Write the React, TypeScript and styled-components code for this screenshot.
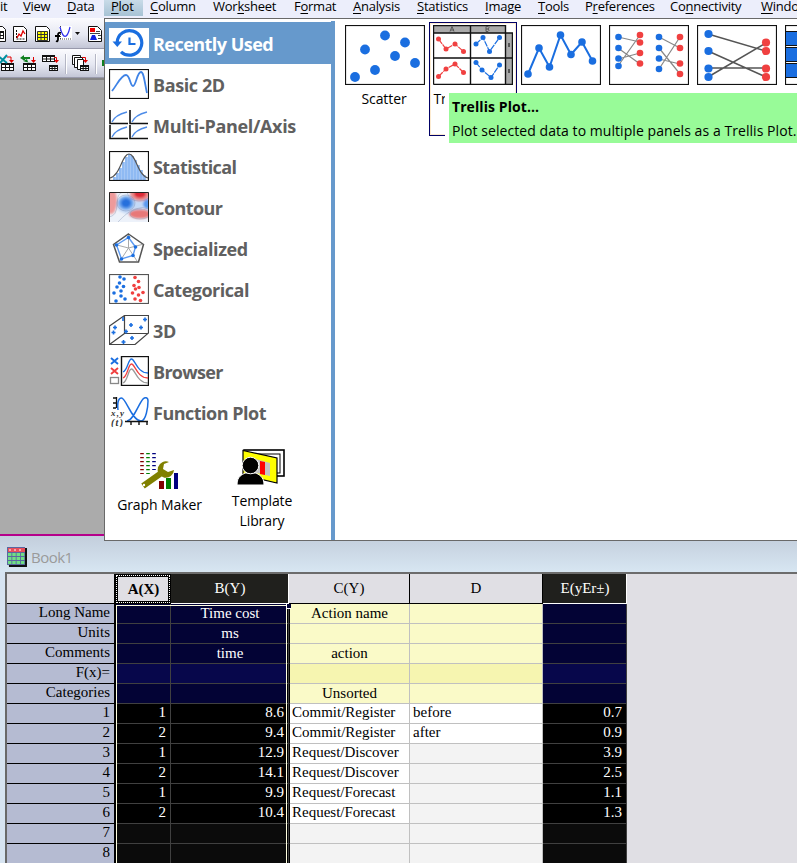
import React from 'react';
import styled, { createGlobalStyle, css } from 'styled-components';

const Global = createGlobalStyle`
  * { box-sizing: border-box; }
  body { margin: 0; overflow: hidden; background: #ababab; }
`;

const ui = "'Open Sans', 'Noto Sans', sans-serif";
const serif = "'Liberation Serif', serif";

const Screen = styled.div`
  position: relative;
  width: 797px;
  height: 863px;
  overflow: hidden;
  display: flex;
  flex-direction: column;
  background: #ababab;
  font-family: ${ui};
  color: #000;
`;

const MenuBar = styled.nav`
  display: flex;
  height: 18px;
  flex: none;
  background: #eceefb;
`;

const MenuItem = styled.div<{ $w: number; $pad?: number; $open?: boolean }>`
  flex: none;
  width: ${p => p.$w}px;
  height: 16px;
  padding-left: ${p => p.$pad ?? 8}px;
  font-size: 13px;
  line-height: 12px;
  letter-spacing: -0.25px;
  white-space: nowrap;
  background: ${p => (p.$open ? 'linear-gradient(#c9dbe8, #a6c2d4)' : 'transparent')};
  u { text-underline-offset: 2px; text-decoration-thickness: 1px; }
`;

const ToolRow = styled.div<{ $h: number }>`
  flex: none;
  height: ${p => p.$h}px;
  width: 105px;
  overflow: hidden;
  background: linear-gradient(#fbfbfe, #e6e8f2 55%, #c3c6d6);
  border-bottom: 1px solid #9899ab;
  svg { display: block; }
`;

const Workspace = styled.div`
  flex: none;
  height: 458px;
  border-top: 2px solid #858585;
  border-bottom: 2px solid #b5008a;
`;

const BookWindow = styled.section`
  flex: 1;
  display: flex;
  flex-direction: column;
  background: #d7e4f1;
`;

const TitleBar = styled.header`
  flex: none;
  height: 36px;
  display: flex;
  align-items: center;
  padding: 5px 0 0 7px;
  gap: 4px;
  background: linear-gradient(#c3cedc, #d7e6f2);
  color: #9a9a9a;
  font-size: 15px;
  letter-spacing: -0.5px;
`;

const Sheet = styled.div`
  position: relative;
  flex: 1;
  margin-left: 5px;
  border: 0 solid #696969;
  border-width: 2px 0 0 2px;
  border-top-color: #6c6c6c;
  background: #e0dfe4;
  font-family: ${serif};
  font-size: 15px;
`;

const HeadRow = styled.div`
  display: grid;
  grid-template-columns: 108px 56px 118px 121px 133px 84px;
  height: 30px;
`;

const HeadCell = styled.div<{ $dark?: boolean; $focus?: boolean }>`
  display: flex;
  align-items: center;
  justify-content: center;
  padding-bottom: 1px;
  border-right: 1px solid #000;
  border-bottom: 1px solid #000;
  background: #e0dfe4;
  ${p => p.$dark && css`
    background: #20201d;
    color: #fff;
    border-color: #fff;
    padding-left: 1px;
  `}
  ${p => p.$focus && css`
    font-weight: bold;
    padding: 1px 0 0 1px;
    border: 1px solid #000;
    outline: 1px dotted #fff;
    outline-offset: -2px;
    box-shadow: inset 0 0 0 2px #000;
  `}
`;

const Row = styled.div`
  display: grid;
  grid-template-columns: 109px 55px 119px 120px 133px 84px;
  height: 20px;
`;

type Tone = 'name' | 'navy' | 'navyHi' | 'yellow' | 'yellowHi' | 'black' | 'blackEmpty' | 'white' | 'empty';
const tones: Record<Tone, [string, string, string]> = {
  name: ['#b5bbd2', '#000', '#000'],
  navy: ['#030335', '#fff', '#404040'],
  navyHi: ['#07074b', '#fff', '#404040'],
  yellow: ['#fafac8', '#000', '#c0c0c0'],
  yellowHi: ['#f6f5b0', '#000', '#c0c0c0'],
  black: ['#000', '#fff', '#404040'],
  blackEmpty: ['#0b0b0b', '#fff', '#404040'],
  white: ['#fff', '#000', '#c0c0c0'],
  empty: ['#f3f3f3', '#000', '#c0c0c0'],
};

const Cell = styled.div<{ $tone: Tone; $align?: string; $pad?: number; $edge?: boolean; $data?: boolean }>`
  height: 20px;
  line-height: ${p => (p.$data ? 16 : 18)}px;
  overflow: hidden;
  white-space: nowrap;
  text-align: ${p => p.$align ?? 'center'};
  padding: 0 ${p => p.$pad ?? 3}px;
  background: ${p => tones[p.$tone][0]};
  color: ${p => tones[p.$tone][1]};
  border-bottom: 1px solid ${p => tones[p.$tone][2]};
  border-right: ${p => (p.$tone === 'name' ? 2 : 1)}px solid ${p => tones[p.$tone][2]};
  ${p => p.$edge && css`
    border-right-color: #000;
    box-shadow: inset -1px 0 #404040, inset -2px 0 #000;
  `}
`;

const Selection = styled.div`
  position: absolute;
  left: 109px;
  top: 31px;
  width: 171px;
  height: 400px;
  border: 1px solid #ffffe0;
`;

const Handle = styled.div`
  position: absolute;
  left: 279px;
  top: 30px;
  width: 5px;
  height: 5px;
  background: #000033;
  border-left: 1px solid #fff;
  border-bottom: 1px solid #fff;
`;

const Popup = styled.div`
  position: absolute;
  left: 104px;
  top: 18px;
  width: 693px;
  height: 523px;
  display: flex;
  background: #fff;
  border: 1px solid #696969;
  border-right: 0;
`;

const Side = styled.aside`
  width: 230px;
  flex: none;
  margin-top: 2px;
  padding-top: 1px;
  border-right: 4px solid #6699cc;
`;

const Category = styled.div<{ $active?: boolean }>`
  position: relative;
  display: flex;
  align-items: center;
  gap: 4px;
  height: 41px;
  padding-left: 4px;
  background: ${p => (p.$active ? '#6699cc' : 'transparent')};
  box-shadow: ${p => (p.$active ? '0 1px #6699cc' : 'none')};
  color: ${p => (p.$active ? '#fff' : '#606060')};
  font-size: 18px;
  font-weight: 700;
  white-space: nowrap;
  svg { flex: none; display: block; }
`;

const CatLabel = styled.span<{ $ls: number }>`
  letter-spacing: ${p => p.$ls}px;
  padding-top: 3px;
`;

const Tools = styled.div`
  display: flex;
  padding-top: 17px;
`;

const Tool = styled.div<{ $w: number; $gap: number; $top?: number }>`
  width: ${p => p.$w}px;
  padding-top: ${p => p.$top ?? 0}px;
  display: flex;
  flex-direction: column;
  align-items: center;
  text-align: center;
  font-size: 14px;
  line-height: 20px;
  letter-spacing: -0.1px;
  white-space: pre-line;
  svg { display: block; margin-bottom: ${p => p.$gap}px; }
`;

const Gallery = styled.div`
  display: flex;
  flex: 1;
  overflow: hidden;
  padding: 3px 0 0 6px;
`;

const Plot = styled.div<{ $selected?: boolean }>`
  flex: none;
  width: 88px;
  height: 114px;
  padding-top: 2px;
  display: flex;
  flex-direction: column;
  align-items: center;
  border: 1px solid ${p => (p.$selected ? '#000066' : 'transparent')};
  box-shadow: ${p => (p.$selected ? 'inset 0 0 0 1px #fdebd0' : 'none')};
  font-size: 14px;
  letter-spacing: -0.1px;
  line-height: 20px;
  white-space: nowrap;
  svg { display: block; flex: none; margin-bottom: 4px; }
  span { margin-right: 2px; }
`;

const Tooltip = styled.div`
  position: absolute;
  left: 344px;
  top: 74px;
  width: 350px;
  height: 50px;
  padding: 4px 0 0 3px;
  background: #98fb98;
  font-size: 14px;
  line-height: 24px;
  letter-spacing: 0.06px;
  white-space: nowrap;
  box-shadow: -4px 0 #fff;
  b { display: block; line-height: 20px; margin-bottom: 2px; letter-spacing: 0.08px; }
`;

const blue = '#1a6ee0';
const red = '#f04040';

const Dots = ({ pts, r, fill }: { pts: number[][]; r: number; fill: string }) => (
  <g fill={fill}>{pts.map(([x, y]) => <circle key={x + '-' + y} cx={x} cy={y} r={r} />)}</g>
);

const line = (pts: number[][]) => pts.map(p => p.join(',')).join(' ');

const Frame = ({ children }: { children: React.ReactNode }) => (
  <svg width="80" height="60" viewBox="0 0 80 60">
    <rect x="0.5" y="0.5" width="79" height="59" fill="#fff" stroke="#111" strokeWidth="1.2" />
    {children}
  </svg>
);

const linePts = [[7, 49], [18, 23], [28.5, 42], [39.5, 10], [50, 29.5], [61, 17], [71.5, 36]];

const ScatterPic = () => (
  <Frame><Dots r={4.9} fill={blue} pts={[[10, 52], [20, 24.5], [30, 45], [40, 10.5], [50, 31], [60, 17.5], [70, 38]]} /></Frame>
);

const trellis: [string, number[][]][] = [
  [red, [[5.5, 14], [13, 24], [22, 19], [30.5, 26.5]]],
  [blue, [[43, 19], [50, 12.5], [56.5, 26.5], [66.5, 12.5]]],
  [red, [[5.5, 51.5], [13, 44], [22, 39], [30.5, 47.5]]],
  [blue, [[43, 37.5], [49, 45], [58, 52.5], [66.5, 40]]],
];

const TrellisPic = () => (
  <svg width="80" height="60" viewBox="0 0 80 60">
    <rect x="0" y="0" width="72" height="8" fill="#aaa" />
    <rect x="72" y="8" width="8" height="52" fill="#aaa" />
    <g fill="none" stroke="#111" strokeWidth="1.4">
      <path d="M.5 59.5V.5H72.5V59.5M.5 59.500H79.500V8M0 8H80M0 33H80M37.500 0V60" />
    </g>
    <g fill="none" stroke="#555">
      <path d="M17 6.500l2-5 2 5M18 5h3M53 1.500v5h2q2-1 0-2.500h-2M53 1.500h2q2 1 0 2.500" />
      <path d="M76 18v4M76 44v4" stroke="#555" strokeWidth="2" />
    </g>
    {trellis.map(([c, p], i) => (
      <g key={i}>
        <polyline points={line(p)} fill="none" stroke={c} strokeWidth="1.2" strokeDasharray="6 .8" />
        <Dots pts={p} r={2.5} fill={c} />
      </g>
    ))}
  </svg>
);

const LinePic = () => (
  <Frame>
    <polyline points={line(linePts)} fill="none" stroke={blue} strokeWidth="2" />
    <Dots pts={linePts} r={3.8} fill={blue} />
  </Frame>
);

const GroupPic = () => (
  <Frame>
    <path d="M9 12L31 17M9 23L31 39M9 34L31 28M9 41L31 10M50 12L71 23M50 23L71 49M50 34L71 39M50 44L71 12" stroke="#888" strokeWidth="1.2" fill="none" />
    <Dots r={3.3} fill={blue} pts={[[9.5, 12], [9.5, 23], [9.5, 33.5], [9.5, 41], [50, 12], [50, 23], [50, 33.5], [50, 44]]} />
    <Dots r={3.3} fill={red} pts={[[31, 10], [31, 17.5], [31, 28], [31, 38.5], [71, 12], [71, 23], [71, 38.5], [71, 49]]} />
  </Frame>
);

const BeforeAfterPic = () => (
  <Frame>
    <path d="M11 9L69 26M11 26L69 52M11 43H69M11 52L69 18" stroke="#555" strokeWidth="1.5" fill="none" />
    <Dots r={4.1} fill={blue} pts={[[11.5, 9], [11.5, 26], [11.5, 43.5], [11.5, 52]]} />
    <Dots r={4.1} fill={red} pts={[[69, 17.5], [69, 26], [69, 43.5], [69, 52]]} />
  </Frame>
);

const BarPic = () => (
  <Frame>
    {[7, 23, 39].map(y => <rect key={y} x="0.5" y={y - 0.5} width="60" height="14" fill={blue} stroke="#111" />)}
  </Frame>
);

const Icon = ({ children, bg }: { children: React.ReactNode; bg?: string }) => (
  <svg width="40" height="30" viewBox="0 0 40 30" fill="none">
    {bg && <rect width="40" height="30" fill={bg} />}
    {children}
  </svg>
);
const Box = ({ c = '#111' }: { c?: string }) => <rect x="0.5" y="0.5" width="39" height="29" stroke={c} strokeWidth="1.2" />;

const RecentIcon = () => (
  <Icon bg="#fff">
    <path d="M8.200 14A12.300 12.300 0 1 1 12 23.800" stroke={blue} strokeWidth="3.2" />
    <path d="M3.500 13.500H13L8.300 19z" fill={blue} />
    <path d="M20.500 9.500V16H26.500" stroke={blue} strokeWidth="2.2" />
  </Icon>
);
const BasicIcon = () => (
  <Icon bg="#fff"><Box /><path d="M3 22C8 16 12 6 17 6c4 0 4 11 7 11S28 3 32 3c3 0 4 13 6 21" stroke="#3f83e6" strokeWidth="1.8" /></Icon>
);
const PanelIcon = () => (
  <Icon>
    {[[1, 0], [21, 0], [1, 15], [21, 15]].map(([x, y]) => (
      <g key={x + '-' + y} transform={`translate(${x} ${y})`}>
        <path d="M0 0V13.500H18" stroke="#111" strokeWidth="1.6" />
        <path d="M2 12Q5 5 17 2" stroke="#4e8ce8" strokeWidth="1.3" />
      </g>
    ))}
  </Icon>
);
const StatIcon = () => (
  <Icon bg="#fff">
    {[[4, 26], [7, 22], [10, 17], [13, 11], [16, 6], [19, 3], [22, 5], [25, 9], [28, 14], [31, 19], [34, 24]].map(([x, y]) => (
      <rect key={x} x={x} y={y} width="2.8" height={29 - y} fill="#8fbaf3" />
    ))}
    <path d="M1 27C11 25 13 3 20 3s9 22 19 24" stroke="#555" strokeWidth="1.2" />
    <Box />
  </Icon>
);
const ContourIcon = () => (
  <svg width="40" height="30" viewBox="0 0 40 30">
    <defs>
      <filter id="soft" x="-30%" y="-30%" width="160%" height="160%"><feGaussianBlur stdDeviation="1.2" /></filter>
      <clipPath id="frame"><rect width="40" height="30" /></clipPath>
    </defs>
    <rect width="40" height="30" fill="#edf2fa" />
    <g clipPath="url(#frame)">
      <g filter="url(#soft)">
        <ellipse cx="21" cy="13" rx="14" ry="9" fill="#c4d9f6" />
        <ellipse cx="17" cy="11" rx="8" ry="7" fill="#6ea8ee" /><ellipse cx="17" cy="11" rx="5" ry="4.5" fill="#2870dc" />
        <ellipse cx="31" cy="2" rx="10" ry="7" fill="#ec8c8c" /><ellipse cx="31" cy="2" rx="6" ry="4" fill="#dd2c38" />
        <ellipse cx="2" cy="9" rx="6" ry="13" fill="#ee9a9a" /><ellipse cx="31" cy="22" rx="11" ry="4.5" fill="#e87878" />
        <ellipse cx="39" cy="12" rx="5" ry="5" fill="#5b9aee" />
      </g>
      <g fill="none" stroke="#8492b0" strokeWidth=".4">
        <ellipse cx="17" cy="11" rx="9" ry="8" /><ellipse cx="31" cy="22" rx="10" ry="5" /><path d="M0 25Q8 24 8 12T15 0M18 0Q20 9 30 9T40 3M9 30Q18 20 26 17T40 17" />
      </g>
    </g>
    <path d="M.5 30V.5H39.500V30" fill="none" stroke="#222" />
  </svg>
);
const RadarIcon = () => (
  <Icon>
    <g stroke="#aaa"><path d="M19.500 15V2M19.500 15L33 11.500M19.500 15L28 28M19.500 15L11 28M19.500 15L6 11.500" /></g>
    <path d="M19.500 1L34.500 11.500 29.500 29H10.500L4.500 11.500z" stroke="#555" strokeWidth="1.5" />
    <path d="M19.500 4.500L26.500 14 24 22.500 12.500 26 7.500 12z" stroke="#5d9af0" strokeWidth="1.4" />
    <Dots r={1.8} fill={blue} pts={[[19.5, 4.5], [26.5, 14], [24, 22.5], [12.5, 26], [7.5, 12]]} />
  </Icon>
);
const CategoricalIcon = () => (
  <Icon bg="#fff">
    <Box c="#555" />
    <Dots r={1.8} fill={blue} pts={[[11, 3], [15, 5], [10.5, 9], [8, 13], [14.5, 12.5], [12, 17], [5, 19], [12, 22], [16, 25], [7, 27]]} />
    <Dots r={1.8} fill={red} pts={[[26, 3.5], [29.5, 7.5], [25, 11.5], [30, 13.5], [26.5, 15], [23.5, 19], [34, 18.5], [29.5, 21], [26, 25], [31.5, 26.5]]} />
  </Icon>
);
const CubeIcon = () => (
  <Icon>
    <path d="M.5 11L15.500.5H39.500V18L26 29.500H.5zM15.500.5V18.500H39.500M15.500 18.500L.5 29.500" stroke="#444" strokeWidth="1.2" />
    <path d="M6 10.500v4M4 12.500h4M4.500 15.500v4M2.500 17.500h4M22 8v4M20 10h4M36 2.500v4M34 4.500h4M32 10.500v4M30 12.500h4M17 14.500v4M15 16.500h4M23 21v4M21 23h4M14.500 25v4M12.500 27h4M14 2v4" stroke={blue} strokeWidth="1.6" />
  </Icon>
);
const BrowserIcon = () => (
  <Icon>
    <path d="M2 2l7 6M9 2L2 8" stroke={blue} strokeWidth="1.9" />
    <path d="M2 12l7 6M9 12l-7 6" stroke={red} strokeWidth="1.9" />
    <rect x="1.500" y="21.500" width="8" height="6" stroke="#888" strokeWidth="1.3" />
    <rect x="12.500" y=".5" width="27" height="29" stroke="#111" strokeWidth="1.4" />
    <path d="M14 27C19 25 19 13 22.500 13S28 27 39 27" stroke="#999" strokeWidth="1.3" />
    <path d="M14 22C19 20 19 8 22.500 8S28 22 39 22" stroke={red} strokeWidth="1.3" />
    <path d="M14 16C19 14 19 3 22.500 3S28 17 39 17" stroke={blue} strokeWidth="1.3" />
  </Icon>
);
const FunctionIcon = () => (
  <Icon>
    <path d="M7.500 0V11M4 1h3M4 6h3M4 11h3" stroke="#111" strokeWidth="1.3" />
    <path d="M9 13C8 4 10 1 12.500 1C17 1 23 24 32 24C37 24 39 10 39 4C39 0 36 0 34 2C29 8 24 24 18 24" stroke={blue} strokeWidth="1.5" />
    <path d="M16 24.500H39M22 25v3M30 25v3M38 25v3" stroke="#111" strokeWidth="1.4" />
    <text x="2" y="19" fontFamily="Liberation Serif" fontStyle="italic" fontSize="9" fontWeight="bold" fill="#333" textLength="13">x,y</text>
    <text x="2" y="29" fontFamily="Liberation Serif" fontStyle="italic" fontSize="10" fontWeight="bold" fill="#333" textLength="12">(t)</text>
  </Icon>
);

const GraphMakerIcon = () => (
  <svg width="40" height="38" viewBox="0 0 40 38">
    {[['#800000', 2, 22], ['#008000', 8, 22], ['#000080', 14, 18]].map(([c, x, end]) => (
      <path key={c} d={`M${x} 1V${end}`} stroke={c as string} strokeWidth="3.6" strokeDasharray="1.200 2.800" />
    ))}
    <path d="M3 34L20 22" stroke="#808000" strokeWidth="6" />
    <path d="M29 10A8.200 8.200 0 1 0 34 18L28 20L23 17L24 12z" fill="#808000" />
    <circle cx="4" cy="33" r="1.200" fill="#fff" />
    <path d="M19 29h5v8h-5z" fill="#800000" /><path d="M26 26h5v11h-5z" fill="#008000" /><path d="M34 21h4v16h-4z" fill="#000080" />
  </svg>
);
const TemplateIcon = () => (
  <svg width="50" height="38" viewBox="0 0 50 38">
    <rect x="7" y="1" width="40" height="26" fill="#fff" stroke="#000" strokeWidth="1.600" />
    <rect x="11" y="5" width="32" height="19" fill="#fff" stroke="#000" />
    <path d="M6 1.500L40 9V34L6 26z" fill="#ff0" stroke="#000" strokeWidth="1.200" />
    <path d="M15 9L33 14V27L15 23z" fill="#c4c4c4" />
    <path d="M23 12L28 13V26L23 25z" fill="#f00" />
    <path d="M0 36C0 27 5 26 8 24H19C25 27 27 30 27 36z" fill="#000" stroke="#fff" />
    <circle cx="13.500" cy="16.500" r="8.300" fill="#000" stroke="#fff" />
  </svg>
);

const MiniGrid = ({ x, y, w = 13, h = 8 }: { x: number; y: number; w?: number; h?: number }) => (
  <g>
    <rect x={x} y={y} width={w} height={h} fill="#111" />
    {[0, 1, 2].map(i => [0, 1].map(j => (
      <rect key={i + '-' + j} x={x + 1 + i * (w - 1) / 3} y={y + 2 + j * (h - 2) / 2} width={(w - 1) / 3 - 1} height={(h - 2) / 2 - 1} fill="#fff" />
    )))}
  </g>
);
const Page = ({ x, w = 14 }: { x: number; w?: number }) => (
  <path d={`M${x + 0.5} 8.500h${w - 4}l3 3v12h-${w - 1}z`} fill="#fff" stroke="#111" />
);

const TopTools = () => (
  <svg width="105" height="29" viewBox="0 0 105 29" fill="none">
    <Page x={-8} /><MiniGrid x={-7} y={13} w={11} />
    <Page x={13} /><path d="M16.500 12v9H25" stroke="#111" strokeDasharray="2 1" /><path d="M17 20l2-4 2 2 2-5 2 3" stroke="#e00000" strokeWidth="1.3" />
    <Page x={35} w={15} />
    <g fill="#ff0" stroke="#333"><path d="M37.500 13.500h10v9h-10zM41 13v9M44.500 13v9M37 16.500h11M37 19.500h11" /></g>
    <rect x="59" y="8" width="13" height="14" fill="#fff" />
    <path d="M58 21H71M60.500 8v13" stroke="#444" strokeDasharray="1 1" />
    <path d="M60 9C63 21 67 22 70 9" stroke="#3030f0" strokeWidth="1.2" />
    <path d="M61 15q-3-1-3 2v4q0 3-2 2M55 18h5" stroke="#000" strokeWidth="1.800" />
    <path d="M75 14h5l-2.500 3z" fill="#111" />
    <path d="M88.500 8.500h9l4 4v11h-13z" fill="#fff" stroke="#111" />
    <path d="M90 10h5v4h-5z" fill="#f00000" /><path d="M90 22l2-5h3l2 5z" fill="#1020e0" />
    <path d="M96 13.500h4M90 15.500h10M98 17.500h3M98 20.500h3" stroke="#444" />
  </svg>
);
const LowerTools = () => (
  <svg width="105" height="30" viewBox="0 0 105 30" fill="none">
    <MiniGrid x={1} y={14} /><path d="M-2 7L7 14M7 6L0 14" stroke="#0090a0" strokeWidth="2" />
    <path d="M7 8h4v4" stroke="#e00000" /><path d="M9 11h5l-2.500 3z" fill="#e00000" />
    <MiniGrid x={23} y={14} />
    <path d="M20 9l4-3v2h6v2h-5v2zM32 14l-4-1-1-3-4 2 3 1z" fill="#108020" />
    <path d="M33.500 8v4" stroke="#e00000" /><path d="M31 11h5l-2.500 3z" fill="#e00000" />
    <MiniGrid x={42} y={6} w={13} h={7} /><MiniGrid x={49} y={16} w={9} h={6} />
    <path d="M54 8.500h2.500V11" stroke="#e00000" /><path d="M54 11h5l-2.500 3z" fill="#e00000" />
    <path d="M65.500 5v20M95.500 5v20" stroke="#b4b6c4" /><path d="M66.500 5v20M96.500 5v20" stroke="#fff" />
    <path d="M72.500 6.500h8v9h-8z" fill="#fff" stroke="#111" /><path d="M74.500 8.500h8v10h-8z" fill="#fff" stroke="#111" /><path d="M77.500 10.500h6v10h-6z" fill="#fff" stroke="#111" />
    <MiniGrid x={80} y={16} w={9} h={6} /><path d="M82 8.500h3.500V11" stroke="#e00000" /><path d="M83 11h5l-2.500 3z" fill="#e00000" />
    <path d="M102 11h3v6h-3z" fill="#108020" />
  </svg>
);
const BookIcon = () => (
  <svg width="20" height="20" viewBox="0 0 20 20">
    <path d="M1 1h19v19H2z" fill="#111" />
    <rect x="0" y="0" width="18" height="18" fill="#5a68a0" />
    {[0, 1, 2, 3].map(i => [0, 1, 2].map(j => (
      <rect key={i + '-' + j} x={1 + i * 4.3} y={6 + j * 4} width="3.400" height="3" fill="#6fe084" />
    )))}
    <path d="M1 1h17v4H1z" fill="#e8505c" /><path d="M3 2v2M8 2v2M13 2v2" stroke="#fff" />
  </svg>
);

const menus: { pre?: string; key?: string; post: string; w: number; pad?: number; open?: boolean }[] = [
  { post: 'it', w: 15, pad: 0 },
  { key: 'V', post: 'iew', w: 44 },
  { key: 'D', post: 'ata', w: 45 },
  { key: 'P', post: 'lot', w: 39, pad: 7, open: true },
  { key: 'C', post: 'olumn', w: 62, pad: 7 },
  { pre: 'Wor', key: 'k', post: 'sheet', w: 81 },
  { pre: 'F', key: 'o', post: 'rmat', w: 59 },
  { key: 'A', post: 'nalysis', w: 64 },
  { key: 'S', post: 'tatistics', w: 68 },
  { key: 'I', post: 'mage', w: 53 },
  { key: 'T', post: 'ools', w: 47 },
  { pre: 'P', key: 'r', post: 'eferences', w: 85 },
  { pre: 'Co', key: 'n', post: 'nectivity', w: 91 },
  { key: 'W', post: 'indow', w: 60 },
];

const categories: [string, React.FC, number][] = [
  ['Recently Used', RecentIcon, -0.53],
  ['Basic 2D', BasicIcon, -0.4],
  ['Multi-Panel/Axis', PanelIcon, -0.33],
  ['Statistical', StatIcon, -0.57],
  ['Contour', ContourIcon, -0.57],
  ['Specialized', RadarIcon, -0.42],
  ['Categorical', CategoricalIcon, -0.5],
  ['3D', CubeIcon, -0.3],
  ['Browser', BrowserIcon, -0.7],
  ['Function Plot', FunctionIcon, -0.5],
];

const labels = [
  ['Long Name', 'Time cost', 'Action name'],
  ['Units', 'ms', ''],
  ['Comments', 'time', 'action'],
  ['F(x)=', '', ''],
  ['Categories', '', 'Unsorted'],
];

const data = [
  ['1', '8.6', 'Commit/Register', 'before', '0.7'],
  ['2', '9.4', 'Commit/Register', 'after', '0.9'],
  ['1', '12.9', 'Request/Discover', '', '3.9'],
  ['2', '14.1', 'Request/Discover', '', '2.5'],
  ['1', '9.9', 'Request/Forecast', '', '1.1'],
  ['2', '10.4', 'Request/Forecast', '', '1.3'],
  ['', '', '', '', ''],
  ['', '', '', '', ''],
];

export default function App() {
  return (
    <Screen>
      <Global />
      <MenuBar>
        {menus.map((m, i) => (
          <MenuItem key={i} $w={m.w} $pad={m.pad} $open={m.open}>
            {m.pre}{m.key && <u>{m.key}</u>}{m.post}
          </MenuItem>
        ))}
      </MenuBar>
      <ToolRow $h={31}><TopTools /></ToolRow>
      <ToolRow $h={29}><LowerTools /></ToolRow>
      <Workspace />
      <BookWindow>
        <TitleBar><BookIcon />Book1</TitleBar>
        <Sheet>
          <HeadRow>
            <HeadCell />
            <HeadCell $focus>A(X)</HeadCell>
            <HeadCell $dark>B(Y)</HeadCell>
            <HeadCell>C(Y)</HeadCell>
            <HeadCell>D</HeadCell>
            <HeadCell $dark>E(yEr±)</HeadCell>
          </HeadRow>
          {labels.map(([name, b, c], i) => {
            const navy: Tone = i === 3 ? 'navyHi' : 'navy';
            const yellow: Tone = i === 3 ? 'yellowHi' : 'yellow';
            return (
              <Row key={name}>
                <Cell $tone="name" $align="right" $pad={4} $data>{name}</Cell>
                <Cell $tone={navy} />
                <Cell $tone={navy} $edge>{b}</Cell>
                <Cell $tone={yellow}>{c}</Cell>
                <Cell $tone={yellow} />
                <Cell $tone={navy} />
              </Row>
            );
          })}
          {data.map(([a, b, c, d, e], i) => {
            const dark: Tone = a ? 'black' : 'blackEmpty';
            return (
              <Row key={i}>
                <Cell $data $tone="name" $align="right" $pad={4}>{i + 1}</Cell>
                <Cell $data $tone={dark} $align="right" $pad={4}>{a}</Cell>
                <Cell $data $tone={dark} $align="right" $pad={5} $edge>{b}</Cell>
                <Cell $data $tone={c ? 'white' : 'empty'} $align="left" $pad={2}>{c}</Cell>
                <Cell $data $tone={d ? 'white' : 'empty'} $align="left">{d}</Cell>
                <Cell $data $tone={dark} $align="right" $pad={4}>{e}</Cell>
              </Row>
            );
          })}
          <Selection />
          <Handle />
        </Sheet>
      </BookWindow>
      <Popup>
        <Side>
          {categories.map(([name, Pic, ls], i) => (
            <Category key={name} $active={i === 0}><Pic /><CatLabel $ls={ls}>{name}</CatLabel></Category>
          ))}
          <Tools>
            <Tool $w={109} $gap={5} $top={3}><GraphMakerIcon />Graph Maker</Tool>
            <Tool $w={96} $gap={4}><TemplateIcon />{'Template\nLibrary'}</Tool>
          </Tools>
        </Side>
        <Gallery>
          <Plot><ScatterPic /><span>Scatter</span></Plot>
          <Plot $selected><TrellisPic /><span>Trellis Plot...</span></Plot>
          <Plot><LinePic /></Plot>
          <Plot><GroupPic /></Plot>
          <Plot><BeforeAfterPic /></Plot>
          <Plot><BarPic /></Plot>
        </Gallery>
        <Tooltip><b>Trellis Plot...</b>Plot selected data to multiple panels as a Trellis Plot.</Tooltip>
      </Popup>
    </Screen>
  );
}
